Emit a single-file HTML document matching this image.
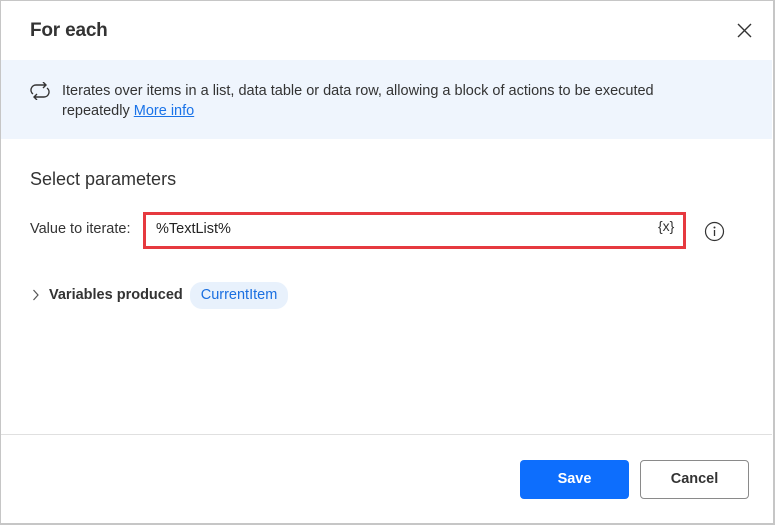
<!DOCTYPE html>
<html><head><style>
body{margin:0;width:775px;height:525px;background:#fff;font-family:"Liberation Sans",sans-serif;position:relative;overflow:hidden;color:#242424}
.frame{position:absolute;left:0;top:0;width:772px;height:522px;border:1px solid #c6c6c6;border-right:2px solid #c6c6c6;border-bottom:2px solid #c6c6c6}
.abs{position:absolute}
</style></head><body>
<div class="frame"></div>
<div class="abs" style="left:30px;top:20px;font-size:19px;font-weight:bold;color:#333;letter-spacing:-0.2px">For each</div>
<svg class="abs" style="left:737px;top:23px" width="15" height="15"><path d="M1 1L14 14M14 1L1 14" stroke="#333" stroke-width="1.4"/></svg>
<div class="abs" style="left:1px;top:60px;width:771px;height:79px;background:#eff5fd"></div>
<svg class="abs" style="left:29px;top:82px" width="22" height="18" viewBox="0 0 22 18" fill="none" stroke="#333" stroke-width="1.4"><path d="M4 12A5 5 0 0 1 7 3H17M14 0L17 3L14 6"/><path d="M18 6A5 5 0 0 1 15 15H5M8 12L5 15L8 18"/></svg>
<div class="abs" style="left:62px;top:81px;font-size:14.5px;line-height:20px;color:#333;width:625px">Iterates over items in a list, data table or data row, allowing a block of actions to be executed repeatedly <span style="color:#1a73e8;text-decoration:underline">More info</span></div>
<div class="abs" style="left:30px;top:169px;font-size:18px;color:#333">Select parameters</div>
<div class="abs" style="left:30px;top:221px;font-size:14.5px;color:#333">Value to iterate:</div>
<div class="abs" style="left:143px;top:212px;width:537px;height:31px;border:3px solid #e6393f"></div>
<div class="abs" style="left:156px;top:221px;font-size:14.5px;color:#242424">%TextList%</div>
<div class="abs" style="left:658px;top:218px;font-size:14px;color:#333">{x}</div>
<svg class="abs" style="left:704px;top:221px" width="21" height="21"><circle cx="10.5" cy="10.5" r="9" fill="none" stroke="#333" stroke-width="1.2"/><circle cx="10.5" cy="6.5" r="1" fill="#333"/><path d="M10.5 9V15" stroke="#333" stroke-width="1.3"/></svg>
<svg class="abs" style="left:32px;top:289px" width="8" height="12"><path d="M1.5 1L6 6L1.5 11" fill="none" stroke="#555" stroke-width="1.2"/></svg>
<div class="abs" style="left:49px;top:287px;font-size:14.5px;font-weight:bold;color:#333">Variables produced</div>
<div class="abs" style="left:190px;top:282px;width:98px;height:27px;border-radius:12px;background:#e8f1fc;color:#1a6fe0;font-size:14.5px;line-height:27px;text-align:center">CurrentItem</div>
<div class="abs" style="left:1px;top:434px;width:771px;height:1px;background:#e0e0e0"></div>
<div class="abs" style="left:520px;top:460px;width:109px;height:39px;background:#0d6efd;border-radius:4px;color:#fff;font-weight:bold;font-size:14.5px;line-height:39px;text-align:center">Save</div>
<div class="abs" style="left:640px;top:460px;width:107px;height:37px;border:1px solid #8a8a8a;border-radius:4px;color:#333;font-weight:bold;font-size:14.5px;line-height:37px;text-align:center">Cancel</div>
</body></html>
